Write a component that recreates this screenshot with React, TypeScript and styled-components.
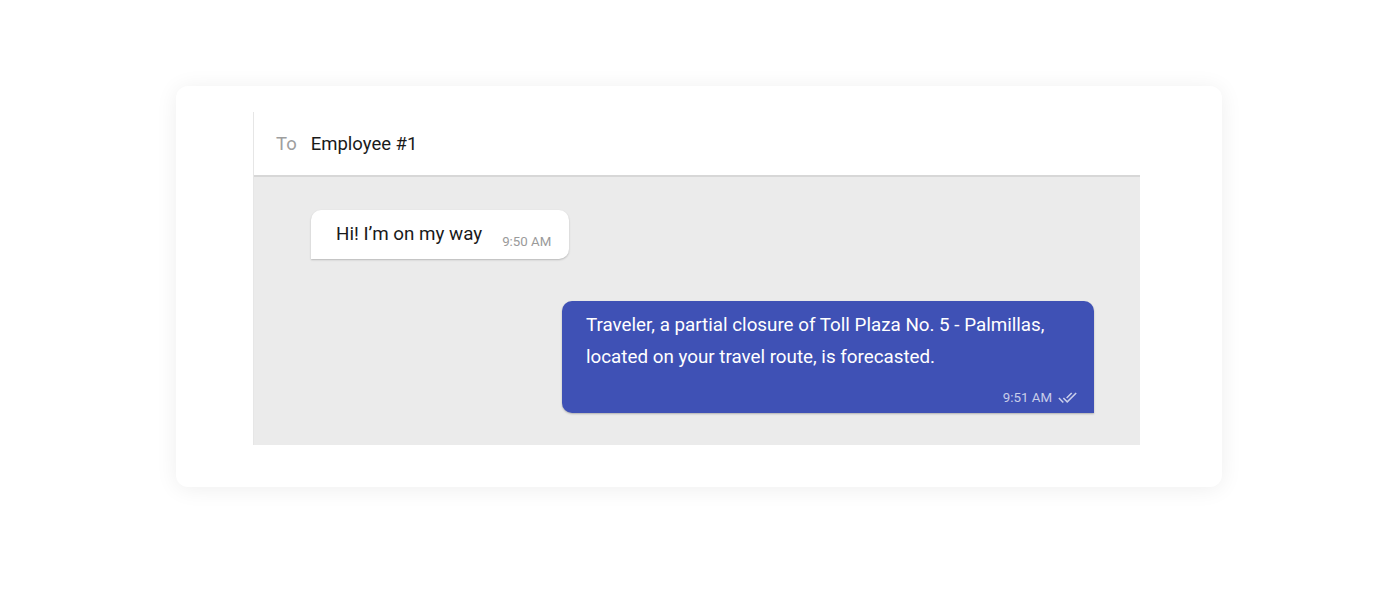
import React from "react";
import styled, { createGlobalStyle } from "styled-components";

interface Message {
  text: string;
  time: string;
  mine: boolean;
}

const messages: Message[] = [
  { text: "Hi! I’m on my way", time: "9:50 AM", mine: false },
  {
    text: "Traveler, a partial closure of Toll Plaza No. 5 - Palmillas, located on your travel route, is forecasted.",
    time: "9:51 AM",
    mine: true
  }
];

const DoneAll = () => (
  <svg width="19" height="19" viewBox="0 0 24 24" fill="currentColor">
    <path d="M18 7l-1.41-1.41-6.34 6.34 1.41 1.41L18 7zm4.24-1.41L11.66 16.17 7.48 12l-1.41 1.41L11.66 19l12-12-1.42-1.41zM.41 13.41L6 19l1.41-1.41L1.83 12 .41 13.41z" />
  </svg>
);

const App = () => {
  return (
    <>
      <GlobalStyle />
      <Page_div>
        <Card_section>
          <Chat_div>
            <Header_div>
              <ToLabel_span>To</ToLabel_span>
              <Recipient_span>Employee #1</Recipient_span>
            </Header_div>
            <Thread_div>
              {messages.map((msg, index) =>
                msg.mine ? (
                  <Row_div key={index} $mine>
                    <SentBubble_div>
                      <SentText_p>{msg.text}</SentText_p>
                      <SentMeta_div>
                        <span>{msg.time}</span>
                        <DoneAll />
                      </SentMeta_div>
                    </SentBubble_div>
                  </Row_div>
                ) : (
                  <Row_div key={index}>
                    <ReceivedBubble_div>
                      <ReceivedText_span>{msg.text}</ReceivedText_span>
                      <ReceivedTime_span>{msg.time}</ReceivedTime_span>
                    </ReceivedBubble_div>
                  </Row_div>
                )
              )}
            </Thread_div>
          </Chat_div>
        </Card_section>
      </Page_div>
    </>
  );
};

export default App;

const GlobalStyle = createGlobalStyle`
  body {
    margin: 0;
    background: #ffffff;
    font-family: Roboto, "Liberation Sans", sans-serif;
  }
`;

const Page_div = styled.div`
  width: 1400px;
  height: 600px;
  padding-top: 86px;
  padding-left: 176px;
  box-sizing: border-box;
`;

const Card_section = styled.section`
  width: 1046px;
  padding: 26px 82px 42px 77px;
  box-sizing: border-box;
  background: #ffffff;
  border-radius: 12px;
  box-shadow: 0 2px 22px rgba(0, 0, 0, 0.07);
`;

const Chat_div = styled.div`
  border-left: 1px solid #e6e6e6;
`;

const Header_div = styled.div`
  height: 63px;
  display: flex;
  align-items: center;
  padding-left: 22px;
  border-bottom: 2px solid #d7d7d7;
  font-size: 18.5px;
`;

const ToLabel_span = styled.span`
  color: #9e9e9e;
  margin-right: 14px;
`;

const Recipient_span = styled.span`
  color: #1a1a1a;
`;

const Thread_div = styled.div`
  background: #ebebeb;
  padding: 33px 46px 32px 57px;
  display: flex;
  flex-direction: column;
  gap: 42px;
`;

const Row_div = styled.div<{ $mine?: boolean }>`
  display: flex;
  justify-content: ${({ $mine }) => ($mine ? "flex-end" : "flex-start")};
`;

const ReceivedBubble_div = styled.div`
  height: 49px;
  box-sizing: border-box;
  display: flex;
  align-items: flex-end;
  padding: 0 18px 10px 25px;
  background: #ffffff;
  border-radius: 10px 10px 10px 0;
  box-shadow: 0 1px 2px rgba(0, 0, 0, 0.22);
`;

const ReceivedText_span = styled.span`
  font-size: 18.8px;
  line-height: 28px;
  color: #1a1a1a;
  margin-bottom: 1px;
`;

const ReceivedTime_span = styled.span`
  font-size: 13.3px;
  line-height: 16px;
  color: #9a9a9a;
  margin-left: 20px;
  margin-bottom: -1px;
`;

const SentBubble_div = styled.div`
  max-width: 532px;
  box-sizing: border-box;
  padding: 8px 17px 8px 24px;
  background: #3f51b5;
  border-radius: 10px 10px 0 10px;
  box-shadow: 0 1px 2px rgba(0, 0, 0, 0.25);
`;

const SentText_p = styled.p`
  margin: 0;
  font-size: 18.8px;
  line-height: 32px;
  color: #ffffff;
`;

const SentMeta_div = styled.div`
  display: flex;
  justify-content: flex-end;
  align-items: center;
  gap: 6px;
  margin-top: 16px;
  height: 16px;
  font-size: 13.3px;
  color: rgba(255, 255, 255, 0.72);
`;
